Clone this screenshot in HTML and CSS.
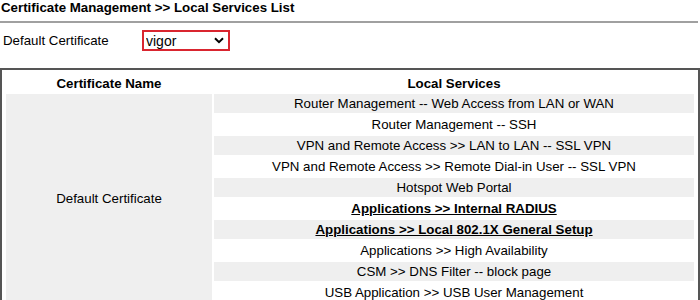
FILE: index.html
```html
<!DOCTYPE html>
<html lang="en">
<head>
  <meta charset="UTF-8">
  <title>Local Services List</title>
  <link rel="stylesheet" href="styles.css">
</head>
<body>
  <!-- Page title -->
  <h1 class="page-title">Certificate Management &gt;&gt; Local Services List</h1>
  <hr class="title-line">

  <!-- Certificate picker -->
  <div class="cert-select-row">
    <label class="cert-label" for="certSelect">Default Certificate</label>
    <span class="select-wrap">
      <select class="cert-select" id="certSelect">
        <option>vigor</option>
      </select>
      <svg class="select-arrow" width="10" height="7" viewBox="0 0 10 7">
        <path d="M1 1.2 L5 5.2 L9 1.2" fill="none" stroke="#000" stroke-width="2"/>
      </svg>
    </span>
  </div>

  <!-- Services table -->
  <table class="services-table">
    <thead>
      <tr>
        <th class="col-name">Certificate Name</th>
        <th>Local Services</th>
      </tr>
    </thead>
    <tbody>
      <tr class="odd">
        <td class="cert-name" rowspan="10">Default Certificate</td>
        <td>Router Management -- Web Access from LAN or WAN</td>
      </tr>
      <tr><td>Router Management -- SSH</td></tr>
      <tr class="odd"><td>VPN and Remote Access &gt;&gt; LAN to LAN -- SSL VPN</td></tr>
      <tr><td>VPN and Remote Access &gt;&gt; Remote Dial-in User -- SSL VPN</td></tr>
      <tr class="odd"><td>Hotspot Web Portal</td></tr>
      <tr><td><a class="service-link" href="#">Applications &gt;&gt; Internal RADIUS</a></td></tr>
      <tr class="odd"><td><a class="service-link" href="#">Applications &gt;&gt; Local 802.1X General Setup</a></td></tr>
      <tr><td>Applications &gt;&gt; High Availability</td></tr>
      <tr class="odd"><td>CSM &gt;&gt; DNS Filter -- block page</td></tr>
      <tr><td>USB Application &gt;&gt; USB User Management</td></tr>
    </tbody>
  </table>
</body>
</html>
```

FILE: styles.css
```css
/* Reset */
* {
  margin: 0;
  padding: 0;
  box-sizing: border-box;
  font-family: "Liberation Sans", Arial, sans-serif;
}

body {
  background-color: #fff;
  color: #000;
  font-size: 13.3px;
}

/* Title */
.page-title {
  font-size: 13.3px;
  font-weight: bold;
  line-height: 16px;
  padding: 0 1px;
}

.title-line {
  border: none;
  border-top: 2px solid #a0a0a0;
  margin: 5px 2px 0 0;
}

/* Certificate picker */
.cert-select-row {
  display: flex;
  align-items: center;
  height: 21px;
  margin-top: 7px;
  padding-left: 3px;
}

.cert-label {
  width: 139px;
}

.select-wrap {
  position: relative;
  display: inline-block;
}

.cert-select {
  appearance: none;
  -webkit-appearance: none;
  width: 88px;
  height: 21px;
  padding: 0 0 0 2px;
  border: 2px solid #d9252f;
  border-radius: 0;
  background-color: #fff;
  font-size: 14px;
  color: #000;
  outline: none;
}

.select-arrow {
  position: absolute;
  right: 6px;
  top: 7px;
  pointer-events: none;
}

/* Table */
.services-table {
  width: 100%;
  margin-top: 17px;
  border: 2px solid #555;
  border-spacing: 2px;
  padding: 2px;
}

.services-table th {
  font-weight: bold;
  height: 18px;
  text-align: center;
}

.services-table .col-name {
  width: 206px;
}

.services-table td {
  height: 19px;
  text-align: center;
  padding: 0;
}

.services-table .odd td {
  background-color: #efefef;
}

.services-table td.cert-name {
  background-color: #efefef;
}

.service-link {
  color: #000;
  font-weight: bold;
  text-decoration: underline;
}
```
